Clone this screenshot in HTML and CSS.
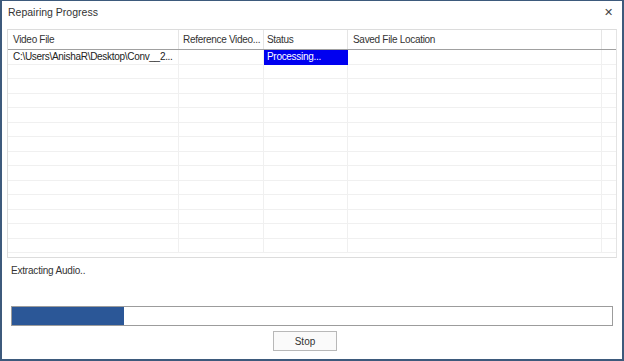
FILE: index.html
```html
<!DOCTYPE html>
<html lang="en">
<head>
    <meta charset="UTF-8">
    <title>Repairing Progress</title>
    <link rel="stylesheet" href="styles.css">
</head>
<body>
    <div class="window">
        <div class="titlebar">
            <span class="title">Repairing Progress</span>
            <span class="close">&#x2715;</span>
        </div>
        <div class="grid-box">
            <div class="row head">
                <div class="cell c1">Video File</div>
                <div class="cell c2">Reference Video...</div>
                <div class="cell c3">Status</div>
                <div class="cell c4">Saved File Location</div>
                <div class="cell c5"></div>
            </div>
            <div class="row">
                <div class="cell c1">C:\Users\AnishaR\Desktop\Conv__2...</div>
                <div class="cell c2"></div>
                <div class="cell c3 busy">Processing...</div>
                <div class="cell c4"></div>
                <div class="cell c5"></div>
            </div>
            <div class="row"><div class="cell c1"></div><div class="cell c2"></div><div class="cell c3"></div><div class="cell c4"></div><div class="cell c5"></div></div>
            <div class="row"><div class="cell c1"></div><div class="cell c2"></div><div class="cell c3"></div><div class="cell c4"></div><div class="cell c5"></div></div>
            <div class="row"><div class="cell c1"></div><div class="cell c2"></div><div class="cell c3"></div><div class="cell c4"></div><div class="cell c5"></div></div>
            <div class="row"><div class="cell c1"></div><div class="cell c2"></div><div class="cell c3"></div><div class="cell c4"></div><div class="cell c5"></div></div>
            <div class="row"><div class="cell c1"></div><div class="cell c2"></div><div class="cell c3"></div><div class="cell c4"></div><div class="cell c5"></div></div>
            <div class="row"><div class="cell c1"></div><div class="cell c2"></div><div class="cell c3"></div><div class="cell c4"></div><div class="cell c5"></div></div>
            <div class="row"><div class="cell c1"></div><div class="cell c2"></div><div class="cell c3"></div><div class="cell c4"></div><div class="cell c5"></div></div>
            <div class="row"><div class="cell c1"></div><div class="cell c2"></div><div class="cell c3"></div><div class="cell c4"></div><div class="cell c5"></div></div>
            <div class="row"><div class="cell c1"></div><div class="cell c2"></div><div class="cell c3"></div><div class="cell c4"></div><div class="cell c5"></div></div>
            <div class="row"><div class="cell c1"></div><div class="cell c2"></div><div class="cell c3"></div><div class="cell c4"></div><div class="cell c5"></div></div>
            <div class="row"><div class="cell c1"></div><div class="cell c2"></div><div class="cell c3"></div><div class="cell c4"></div><div class="cell c5"></div></div>
            <div class="row"><div class="cell c1"></div><div class="cell c2"></div><div class="cell c3"></div><div class="cell c4"></div><div class="cell c5"></div></div>
            <div class="row last"><div class="cell c1"></div><div class="cell c2"></div><div class="cell c3"></div><div class="cell c4"></div><div class="cell c5"></div></div>
        </div>
        <div class="step">Extracting Audio..</div>
        <div class="progress">
            <div class="fill" style="width: 112px;"></div>
        </div>
        <div class="actions">
            <button class="stop">Stop</button>
        </div>
    </div>
</body>
</html>
```
FILE: styles.css
```css
html, body {
    margin: 0;
    padding: 0;
}
body {
    width: 624px;
    height: 361px;
    font-family: "Liberation Sans", Arial, sans-serif;
    font-size: 10px;
    color: #222;
    background: #fff;
}
.window {
    box-sizing: border-box;
    width: 624px;
    height: 361px;
    border: 2px solid #3d5a7c;
    border-top-width: 1px;
    background: #fff;
    padding: 0 5px 0 5px;
}
.titlebar {
    display: flex;
    justify-content: space-between;
    align-items: center;
    height: 22px;
    padding: 0 4px 6px 1px;
}
.title {
    color: #333;
    font-size: 10.5px;
}
.close {
    font-size: 11px;
    color: #444;
}
.grid-box {
    box-sizing: border-box;
    width: 610px;
    height: 229px;
    border: 1px solid #dcdcdc;
    border-right-color: #e4e4e4;
}
.row {
    display: flex;
    height: 14.5px;
}
.row.head {
    height: 19px;
    border-bottom: 1px solid #a0a0a0;
}
.cell {
    box-sizing: border-box;
    border-right: 1px solid #f0f0f0;
    border-bottom: 1px solid #f0f0f0;
    padding: 0 5px;
    white-space: nowrap;
    overflow: hidden;
    line-height: 13px;
    letter-spacing: -0.3px;
}
.head .cell {
    border-right: 1px solid #e5e5e5;
    border-bottom: none;
    line-height: 19px;
    color: #333;
}
.c1 { width: 171px; }
.c2 { width: 85px; }
.c3 { width: 84px; }
.c4 { width: 254px; }
.c5 { flex: 1; border-right: none; }
.head .c5 { border-right: none; }
.head .c2 { padding-left: 4px; }
.head .c3, .busy { padding-left: 3px; }
.busy {
    background: #0000f0;
    color: #fff;
    border-color: #0000f0;
}
.step {
    padding: 7px 0 0 4px;
    height: 29px;
    color: #333;
    letter-spacing: -0.2px;
}
.progress {
    box-sizing: border-box;
    margin: 12px 0 0 4px;
    width: 602px;
    height: 20px;
    border: 1px solid #9c9c9c;
    background: #fff;
}
.fill {
    height: 100%;
    background: #2b5797;
}
.actions {
    display: flex;
    padding: 5px 0 0 266px;
}
.stop {
    box-sizing: border-box;
    width: 64px;
    height: 20px;
    border: 1px solid #b8b8b8;
    background: #fafafa;
    font-family: "Liberation Sans", Arial, sans-serif;
    font-size: 10px;
    color: #333;
    padding: 0;
}
```
